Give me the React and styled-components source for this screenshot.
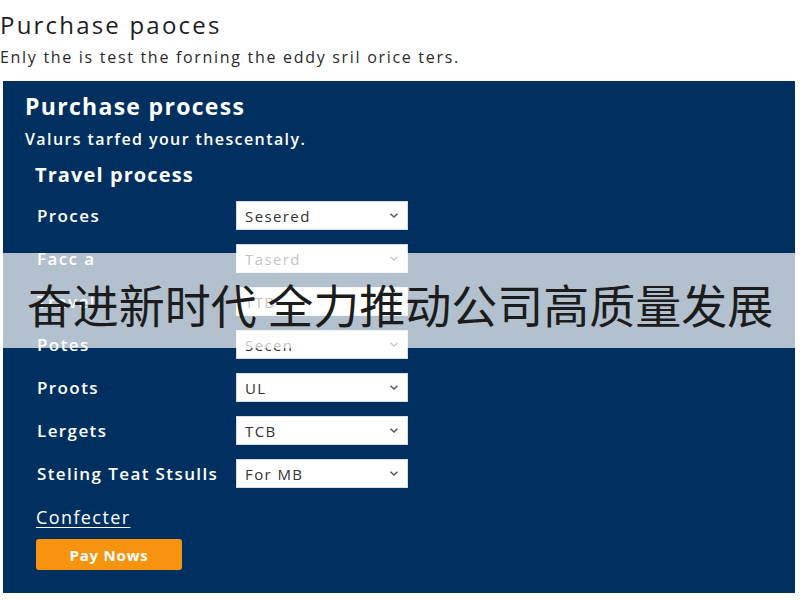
import React from "react";
import styled, { createGlobalStyle } from "styled-components";

const Global = createGlobalStyle`
  html, body { margin: 0; padding: 0; background: #ffffff; }
  body { font-family: "Open Sans", "Noto Sans", sans-serif; width: 800px; height: 600px; overflow: hidden; }
`;

const Page = styled.div`
  position: relative;
  width: 800px;
  height: 600px;
  display: flex;
  flex-direction: column;
`;

const Header = styled.header`
  padding: 9px 0 0 0;
  display: flex;
  flex-direction: column;
`;

const Title = styled.h1`
  margin: 0;
  font-size: 24px;
  line-height: 32px;
  font-weight: 400;
  color: #1e1e1e;
  letter-spacing: 2.2px;
`;

const Subtitle = styled.p`
  margin: 5px 0 0 0;
  font-size: 16px;
  line-height: 22px;
  color: #2a2a2a;
  letter-spacing: 1.7px;
`;

const Panel = styled.section`
  margin: 13px 5px 0 3px;
  height: 512px;
  box-sizing: border-box;
  background: #00305f;
  padding: 10px 22px 0 22px;
  display: flex;
  flex-direction: column;
  align-items: flex-start;
  color: #ffffff;
`;

const PanelTitle = styled.h2`
  margin: 0;
  font-size: 23px;
  line-height: 30px;
  font-weight: 700;
  letter-spacing: 1.3px;
`;

const PanelDesc = styled.p`
  margin: 7px 0 0 0;
  font-size: 16px;
  line-height: 22px;
  font-weight: 600;
  letter-spacing: 1.4px;
`;

const SectionTitle = styled.h3`
  margin: 11px 0 0 10px;
  font-size: 20px;
  line-height: 28px;
  font-weight: 700;
  letter-spacing: 1.1px;
`;

const Form = styled.div`
  margin: 12px 0 0 12px;
  display: flex;
  flex-direction: column;
  gap: 14px;
`;

const Row = styled.div`
  display: grid;
  grid-template-columns: 199px 172px;
  align-items: center;
  height: 29px;
`;

const Label = styled.span`
  font-size: 17px;
  font-weight: 600;
  color: #ffffff;
  letter-spacing: 1.4px;
  white-space: nowrap;
`;

const Select = styled.div`
  box-sizing: border-box;
  height: 29px;
  background: #ffffff;
  border: 1px solid #d7dde4;
  display: flex;
  align-items: center;
  justify-content: space-between;
  padding: 0 8px 0 8px;
  font-size: 15px;
  color: #333333;
  letter-spacing: 1.4px;
`;

const Chevron = () => (
  <svg width="10" height="7" viewBox="0 0 10 7">
    <path d="M1.5 1.8 L5 5 L8.5 1.8" fill="none" stroke="#555" strokeWidth="1.5" />
  </svg>
);

const Link = styled.a`
  margin: 17px 0 0 11px;
  font-size: 18px;
  line-height: 24px;
  color: #ffffff;
  text-decoration: underline;
  text-underline-offset: 3px;
  text-decoration-thickness: 1px;
  letter-spacing: 1.4px;
`;

const PayButton = styled.button`
  margin: 10px 0 0 11px;
  width: 146px;
  height: 31px;
  border: none;
  border-radius: 3px;
  background: #f7940f;
  color: #ffffff;
  font-family: "Open Sans", sans-serif;
  font-size: 15px;
  font-weight: 700;
  letter-spacing: 0.8px;
`;

const Banner = styled.div`
  position: absolute;
  left: 0;
  top: 253px;
  width: 800px;
  height: 95px;
  box-sizing: border-box;
  padding-top: 4px;
  background: rgba(255, 255, 255, 0.7);
  display: flex;
  align-items: center;
  justify-content: center;
  font-family: "Noto Sans CJK SC", "Noto Sans", sans-serif;
  font-size: 46px;
  color: #1c1c1c;
  white-space: pre;
`;

const rows = [
  ["Proces", "Sesered"],
  ["Facc a", "Taserd"],
  ["Travel", "TTB"],
  ["Potes", "Secen"],
  ["Proots", "UL"],
  ["Lergets", "TCB"],
  ["Steling Teat Stsulls", "For MB"],
];

export default function App() {
  return (
    <Page>
      <Global />
      <Header>
        <Title>Purchase paoces</Title>
        <Subtitle>Enly the is test the forning the eddy sril orice ters.</Subtitle>
      </Header>
      <Panel>
        <PanelTitle>Purchase process</PanelTitle>
        <PanelDesc>Valurs tarfed your thescentaly.</PanelDesc>
        <SectionTitle>Travel process</SectionTitle>
        <Form>
          {rows.map(([l, v]) => (
            <Row key={l}>
              <Label>{l}</Label>
              <Select>
                <span>{v}</span>
                <Chevron />
              </Select>
            </Row>
          ))}
        </Form>
        <Link href="#">Confecter</Link>
        <PayButton>Pay Nows</PayButton>
      </Panel>
      <Banner>奋进新时代 全力推动公司高质量发展</Banner>
    </Page>
  );
}
